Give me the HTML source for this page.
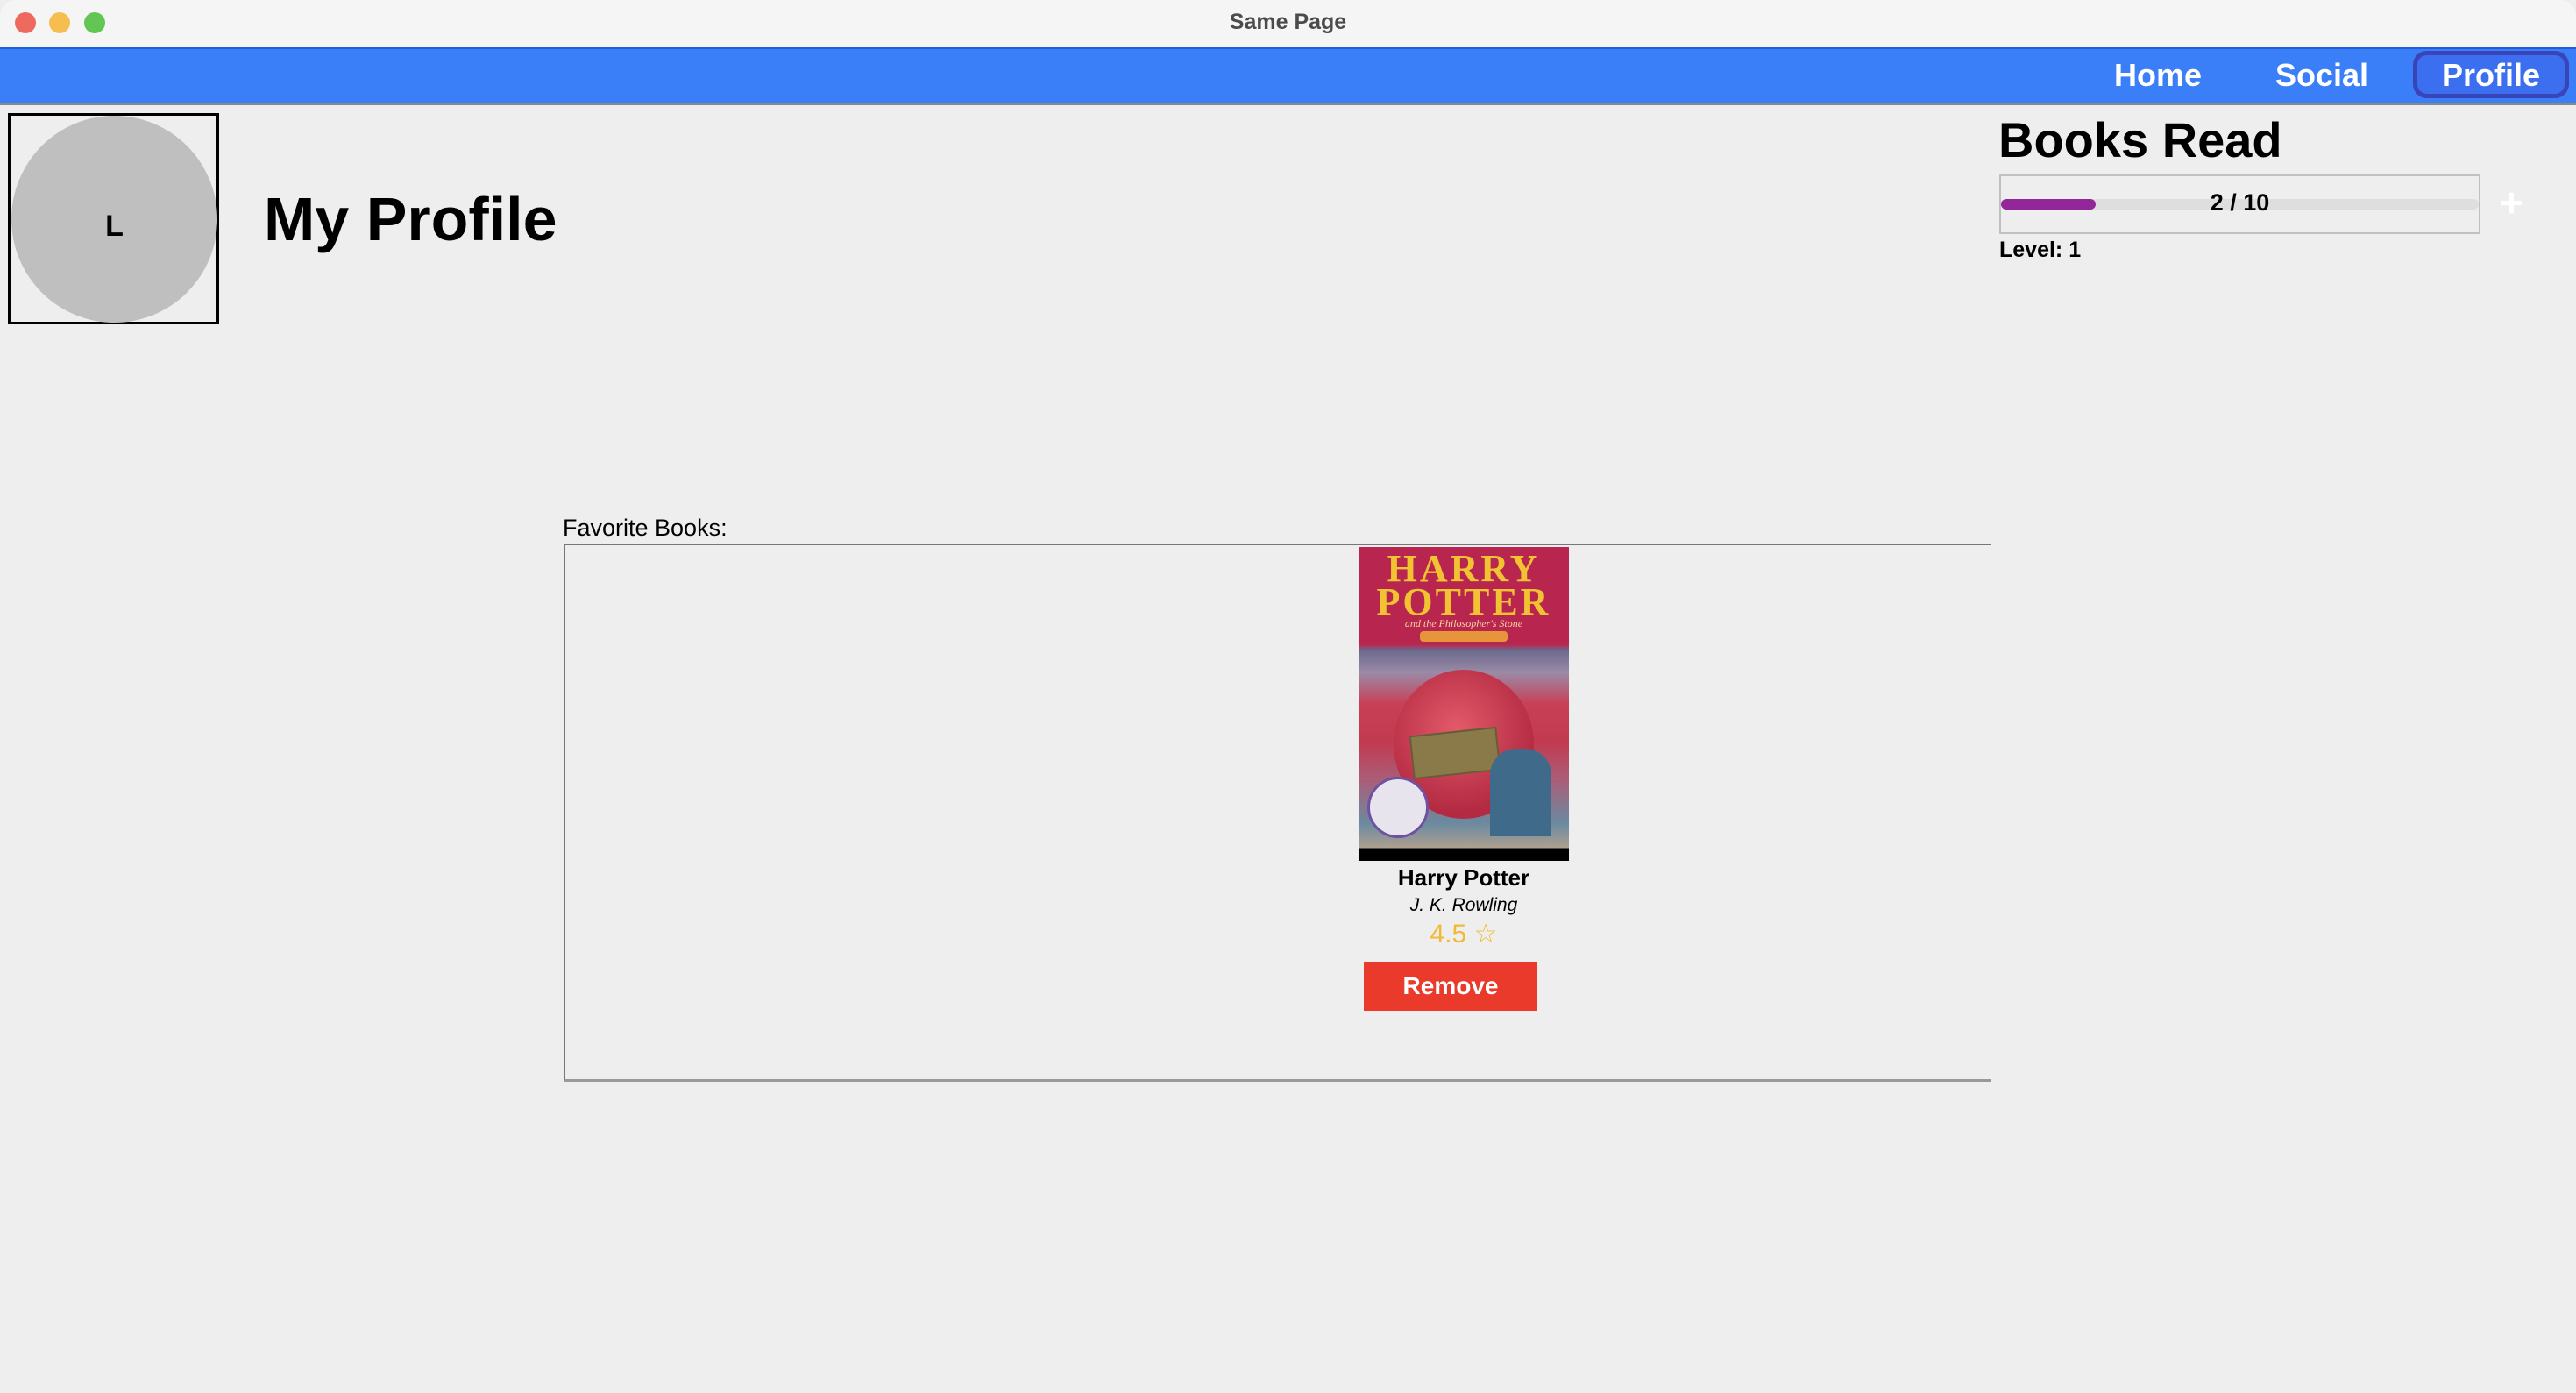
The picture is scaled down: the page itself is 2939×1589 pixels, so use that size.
<!DOCTYPE html>
<html><head><meta charset="utf-8"><style>
*{margin:0;padding:0;box-sizing:border-box}
body{width:2939px;height:1589px;background:#eeeeee;font-family:"Liberation Sans",sans-serif;position:relative;overflow:hidden}
.a{position:absolute}
</style></head><body>
<div class="a" style="left:0;top:0;width:2939px;height:54px;background:#f5f5f5;border-radius:18px 18px 0 0"></div>
<div class="a" style="left:17px;top:14px;width:24px;height:24px;border-radius:50%;background:#ee6a5f"></div>
<div class="a" style="left:56px;top:14px;width:24px;height:24px;border-radius:50%;background:#f6be4f"></div>
<div class="a" style="left:96px;top:14px;width:24px;height:24px;border-radius:50%;background:#62c554"></div>
<div class="a" style="left:0;top:8px;width:2939px;text-align:center;font-size:25px;font-weight:bold;color:#4b4b4b;line-height:34px">Same Page</div>
<div class="a" style="left:0;top:54px;width:2939px;height:66px;background:#3a7ff7;border-top:2px solid #1c5fd6;border-bottom:3px solid #888"></div>
<div class="a" style="left:2412px;top:62px;font-size:36px;font-weight:bold;color:#fff;line-height:48px">Home</div>
<div class="a" style="left:2596px;top:62px;font-size:36px;font-weight:bold;color:#fff;line-height:48px">Social</div>
<div class="a" style="left:2753px;top:58px;width:178px;height:54px;border:5px solid #3944b8;border-radius:16px;background:#3b6ff0"></div>
<div class="a" style="left:2753px;top:62px;width:178px;text-align:center;font-size:36px;font-weight:bold;color:#fff;line-height:48px">Profile</div>

<div class="a" style="left:9px;top:129px;width:241px;height:241px;border:3px solid #000"></div>
<div class="a" style="left:13px;top:132px;width:235px;height:236px;border-radius:50%;background:#bfbfbf"></div>
<div class="a" style="left:13px;top:238px;width:235px;text-align:center;font-size:34px;font-weight:bold;line-height:40px">L</div>
<div class="a" style="left:301px;top:208px;font-size:70px;font-weight:bold;line-height:84px">My Profile</div>

<div class="a" style="left:2280px;top:126px;font-size:56px;font-weight:bold;line-height:68px">Books Read</div>
<div class="a" style="left:2281px;top:199px;width:549px;height:68px;border:2px solid #c0c0c0"></div>
<div class="a" style="left:2283px;top:227px;width:545px;height:12px;border-radius:6px;background:#dedede"></div>
<div class="a" style="left:2283px;top:227px;width:108px;height:12px;border-radius:6px;background:#92279a"></div>
<div class="a" style="left:2281px;top:214px;width:549px;text-align:center;font-size:27px;font-weight:bold;line-height:34px">2 / 10</div>
<div class="a" style="left:2852px;top:208px;font-size:46px;font-weight:bold;color:#fff;line-height:46px">+</div>
<div class="a" style="left:2281px;top:270px;font-size:25px;font-weight:bold;line-height:30px">Level: 1</div>

<div class="a" style="left:642px;top:586px;font-size:27px;line-height:32px">Favorite Books:</div>
<div class="a" style="left:643px;top:620px;width:1628px;height:614px;border-top:2px solid #777;border-left:2px solid #777;border-bottom:3px solid #999"></div>

<div class="a" style="left:1550px;top:624px;width:240px;height:358px;background:linear-gradient(180deg,#b8264f 0,#b8264f 31%,#6c6a8e 33%,#9a8aa6 40%,#c74055 50%,#c23a4f 62%,#a8607a 75%,#6a8aa0 88%,#b0a090 96%,#000 96%,#000 100%);overflow:hidden">
 <div class="a" style="left:0;top:6px;width:240px;text-align:center;font-family:'Liberation Serif',serif;font-size:44px;font-weight:bold;color:#f1c232;line-height:38px;letter-spacing:3px">HARRY<br>POTTER</div>
 <div class="a" style="left:0;top:80px;width:240px;text-align:center;font-family:'Liberation Serif',serif;font-style:italic;font-size:12px;color:#f4d8a0">and the Philosopher's Stone</div>
 <div class="a" style="left:70px;top:96px;width:100px;height:12px;background:#e7953a;border-radius:4px"></div>
 <div class="a" style="left:40px;top:140px;width:160px;height:170px;border-radius:50%;background:radial-gradient(circle at 45% 40%,#e35a6a,#b32a42 70%)"></div>
 <div class="a" style="left:60px;top:210px;width:100px;height:50px;background:#8a7a4a;border:2px solid #6a5a3a;transform:rotate(-6deg)"></div>
 <div class="a" style="left:10px;top:262px;width:70px;height:70px;border-radius:50%;background:#e8e4ee;border:3px solid #7050a0"></div>
 <div class="a" style="left:150px;top:230px;width:70px;height:100px;background:#3f6a8a;border-radius:30px 30px 0 0"></div>
</div>
<div class="a" style="left:1490px;top:984px;width:360px;text-align:center;font-size:26px;font-weight:bold;line-height:34px">Harry Potter</div>
<div class="a" style="left:1490px;top:1018px;width:360px;text-align:center;font-size:21px;font-style:italic;line-height:30px">J. K. Rowling</div>
<div class="a" style="left:1490px;top:1046px;width:360px;text-align:center;font-size:30px;color:#f2b934;line-height:40px">4.5 ☆</div>
<div class="a" style="left:1556px;top:1097px;width:198px;height:56px;background:#e93a2b;color:#fff;font-size:28px;font-weight:bold;text-align:center;line-height:56px">Remove</div>
</body></html>
